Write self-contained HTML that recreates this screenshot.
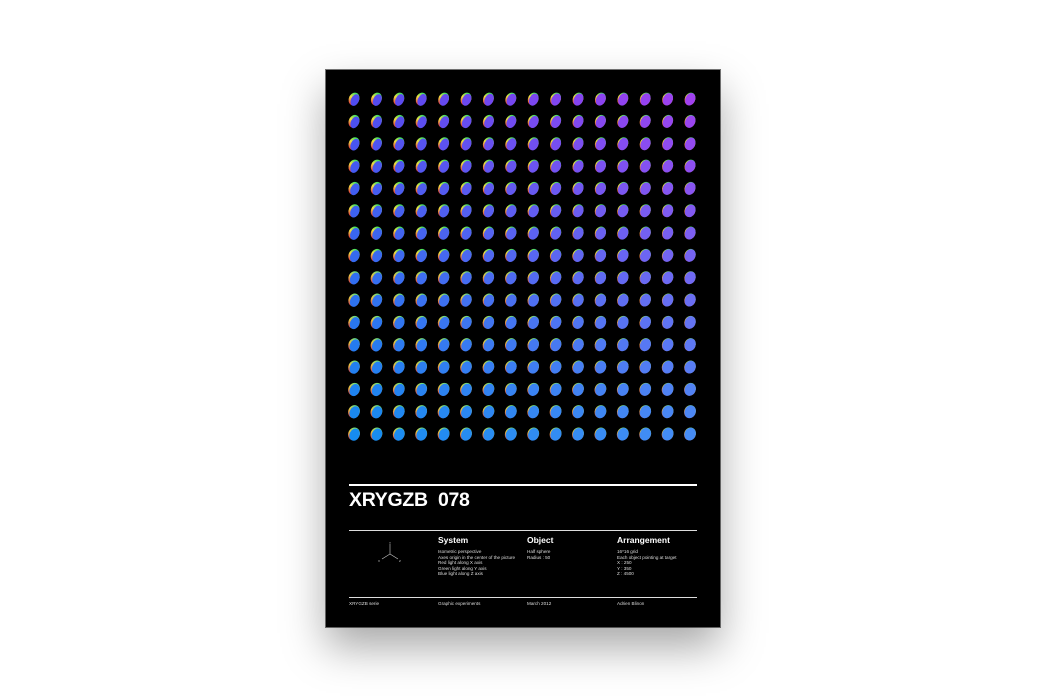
<!DOCTYPE html>
<html><head><meta charset="utf-8"><style>
body{margin:0;width:1046px;height:697px;background:#fff;overflow:hidden;position:relative;font-family:"Liberation Sans",Arial,sans-serif}
#p{position:absolute;left:326px;top:70px;width:394px;height:557px;background:#000;box-shadow:0 20px 40px rgba(0,0,0,.35),0 0 0 1px #777}
.t{position:absolute;color:#fff;white-space:nowrap}
.h{font-weight:bold;font-size:8.5px}
.s{font-size:4.6px;line-height:5.6px;color:#ddd}
.ln{position:absolute;left:23px;width:348px;background:#ddd}
</style></head><body>
<div id="p">
<svg id="g" width="394" height="557" style="position:absolute;left:0;top:0"></svg>
<div class="ln" style="top:414px;height:2px;background:#fff"></div>
<div class="t" style="left:23px;top:419px;font-size:19.5px;font-weight:bold;letter-spacing:-0.3px">XRYGZB&nbsp; 078</div>
<div class="ln" style="top:460px;height:1px"></div>
<svg style="position:absolute;left:50px;top:470px" width="28" height="26"><g stroke="#ccc" stroke-width=".6" fill="none"><path d="M14 4V14L6 19M14 14L22 19"/></g><text x="13" y="4" fill="#ccc" font-size="3">Y</text><text x="2" y="22" fill="#ccc" font-size="3">X</text><text x="23" y="22" fill="#ccc" font-size="3">Z</text></svg>
<div class="t h" style="left:112px;top:465px">System</div>
<div class="t h" style="left:201px;top:465px">Object</div>
<div class="t h" style="left:291px;top:465px">Arrangement</div>
<div class="t s" style="left:112px;top:479px">Isometric perspective<br>Axes origin in the center of the picture<br>Red light along X axis<br>Green light along Y axis<br>Blue light along Z axis</div>
<div class="t s" style="left:201px;top:479px">Half sphere<br>Radius : 50</div>
<div class="t s" style="left:291px;top:479px">16*16 grid<br>Each object pointing at target<br>X : 250<br>Y : 350<br>Z : 4500</div>
<div class="ln" style="top:527px;height:1px"></div>
<div class="t s" style="left:23px;top:531px">XRYGZB serie</div>
<div class="t s" style="left:112px;top:531px">Graphic experiments</div>
<div class="t s" style="left:201px;top:531px">March 2012</div>
<div class="t s" style="left:291px;top:531px">Adrien Blinon</div>
</div>
<script>
var g=document.getElementById('g'),s='<defs>';
function mix(a,b,t){return a.map((v,i)=>Math.round(v+(b[i]-v)*t));}
var TL=[80,76,240],TR=[160,64,240],BL=[22,140,240],BR=[70,140,245];
var out='';
for(var r=0;r<16;r++)for(var c=0;c<16;c++){
 var u=c/15,v=r/15;
 var col=mix(mix(TL,TR,u),mix(BL,BR,u),v);
 var x=28+c*22.4,y=29+r*22.33;
 var rim=2.4*(1-u*0.75)*(1-v*0.35);
 var rx=5.2+v*0.6, ry=6.6;
 out+='<ellipse cx="'+x+'" cy="'+y+'" rx="'+rx+'" ry="'+ry+'" fill="url(#rm'+(r<8?'a':'b')+')" transform="rotate(25 '+x+' '+y+')"/>';
 out+='<ellipse cx="'+(x+rim*0.55)+'" cy="'+(y+rim*0.25)+'" rx="'+(rx-rim*0.5)+'" ry="'+(ry-rim*0.2)+'" fill="rgb('+col+')" transform="rotate(25 '+x+' '+y+')"/>';
}
s+='<linearGradient id="rma" x1="0" y1="0" x2="0" y2="1"><stop offset="0" stop-color="#30e060"/><stop offset=".45" stop-color="#f0e040"/><stop offset="1" stop-color="#e03040"/></linearGradient>';
s+='<linearGradient id="rmb" x1="0" y1="0" x2="0" y2="1"><stop offset="0" stop-color="#60e080"/><stop offset=".5" stop-color="#e8c040"/><stop offset="1" stop-color="#d04050"/></linearGradient></defs>';
g.innerHTML=s+out;
</script>
</body></html>
